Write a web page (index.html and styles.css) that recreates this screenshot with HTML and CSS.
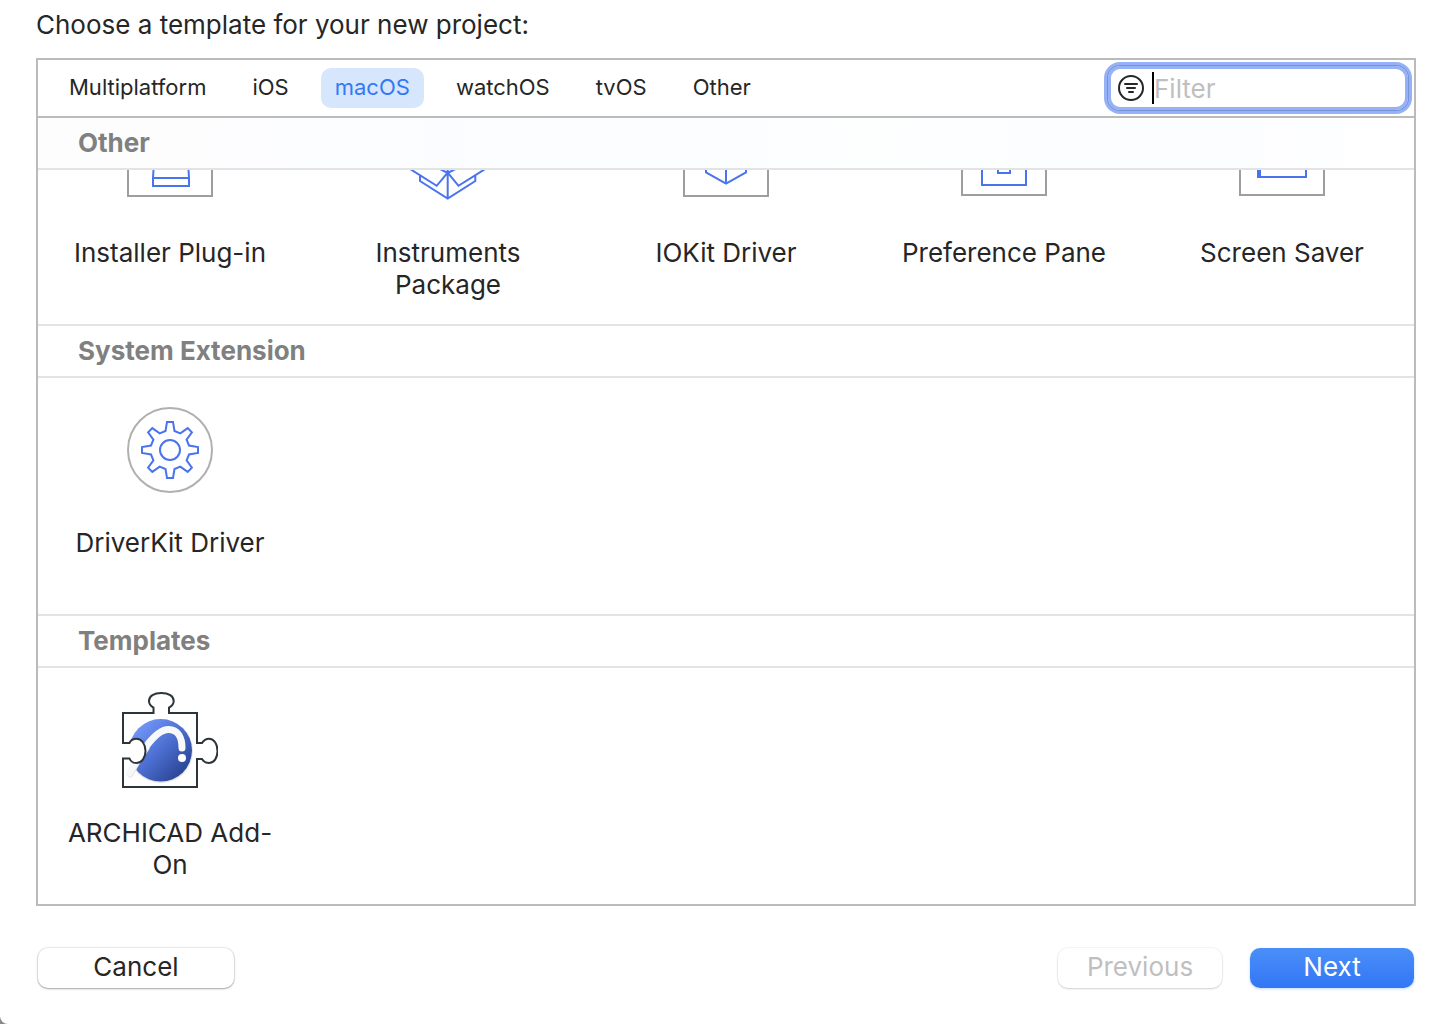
FILE: index.html
```
<!DOCTYPE html>
<html lang="en">
<head>
<meta charset="UTF-8">
<meta name="viewport" content="width=device-width, initial-scale=1.0">
<title>New Project</title>
<link rel="stylesheet" href="styles.css">
</head>

<body>

<main class="dialog">
    <h1>Choose a template for your new project:</h1>

    <div class="panel">
        <div class="toolbar">
            <div class="tabs">
                <button type="button" class="tab">Multiplatform</button>
                <button type="button" class="tab">iOS</button>
                <button type="button" class="tab active">macOS</button>
                <button type="button" class="tab">watchOS</button>
                <button type="button" class="tab">tvOS</button>
                <button type="button" class="tab">Other</button>
            </div>
            <label class="filter">
                <svg width="26" height="26" viewBox="0 0 26 26" aria-hidden="true">
                    <circle cx="13" cy="13" r="12"/>
                    <path d="M7 9H19M9 13H17M11 17H15"/>
                </svg>
                <span class="caret"></span>
                <input type="text" placeholder="Filter" aria-label="Filter">
            </label>
        </div>

        <section>
            <h2 class="stuck">Other</h2>
            <!-- scrolled: only the lower part of these icons shows -->
            <ul class="templates scrolled">
                <li>
                    <svg class="icon" viewBox="0 58 96 38">
                        <path class="frame" d="M6 50V84H90V50"/>
                        <path d="M32 50L31 66V74H67V66L66 50M31 66H67"/>
                    </svg>
                    Installer Plug-in
                </li>
                <li>
                    <svg class="icon" viewBox="0 58 96 38">
                        <path d="M20 63V69L47.7 86.5L75.3 69V63M47.7 86.5V58M9 56.3L36.7 73.8L47.7 60.5L58.5 73.8L86.3 56.3M38 56L47.7 61L57.4 56"/>
                    </svg>
                    Instruments Package
                </li>
                <li>
                    <svg class="icon" viewBox="0 58 96 38">
                        <path class="frame" d="M6 50V84H90V50"/>
                        <path d="M28 50V60.3L48 71.7L68 60.3V50M48 50V71.7"/>
                    </svg>
                    IOKit Driver
                </li>
                <li>
                    <svg class="icon" viewBox="0 58 96 38">
                        <path class="frame" d="M6 50V83H90V50"/>
                        <path d="M26 50V73H70V50M42 50V61H54V50"/>
                    </svg>
                    Preference Pane
                </li>
                <li>
                    <svg class="icon" viewBox="0 58 96 38">
                        <path class="frame" d="M6 50V83H90V50"/>
                        <path d="M24 50V65H72V50M26 50V65"/>
                    </svg>
                    Screen Saver
                </li>
            </ul>
        </section>

        <section>
            <h2>System Extension</h2>
            <ul class="templates">
                <li>
                    <svg class="icon" viewBox="0 0 96 96">
                        <circle class="ring" cx="48" cy="48" r="42"/>
                        <g transform="translate(48 48)">
                            <path d="M-4.5 -19L-3 -28H3L4.5 -19L10.3 -16.6L17.7 -21.9L21.9 -17.7L16.6 -10.3L19 -4.5L28 -3V3L19 4.5L16.6 10.3L21.9 17.7L17.7 21.9L10.3 16.6L4.5 19L3 28H-3L-4.5 19L-10.3 16.6L-17.7 21.9L-21.9 17.7L-16.6 10.3L-19 4.5L-28 3V-3L-19 -4.5L-16.6 -10.3L-21.9 -17.7L-17.7 -21.9L-10.3 -16.6Z"/>
                            <circle r="10"/>
                        </g>
                    </svg>
                    DriverKit Driver
                </li>
            </ul>
        </section>

        <section>
            <h2>Templates</h2>
            <ul class="templates">
                <li>
                    <svg class="icon puzzle" viewBox="0 0 96 96">
                        <defs>
                            <linearGradient id="ball" x1="0.1" y1="0.1" x2="0.9" y2="0.9">
                                <stop offset="0" stop-color="#7599fb"/>
                                <stop offset="0.5" stop-color="#4c6ed0"/>
                                <stop offset="1" stop-color="#28418f"/>
                            </linearGradient>
                        </defs>
                        <circle class="ball-shadow" cx="39" cy="59" r="32"/>
                        <circle class="ball" cx="38.7" cy="58.3" r="31.3"/>
                        <path class="swoosh-shadow" d="M8 82C13 73 17 65 24 56"/>
                        <path class="swoosh" d="M7.5 81C13 71 17 63 24.5 54C32 44 39 37.5 46.5 37.5C56 37.5 60 46 60 56"/>
                        <circle class="dot" cx="60" cy="66" r="4"/>
                        <path class="indent" d="M1 51H7.500C8.500 48.500 11 46.700 14.500 46.700C19.500 46.700 23.500 52 23.500 59S19.500 71 14.500 71C11 71 8.500 69 7.500 66.500H1Z"/>
                        <path class="piece" d="M1 21H31.5V15.7C28.5 14 27 11.5 27 9C27 4 32 1 39.3 1S51.7 4 51.7 9C51.7 11.500 50 14 47 15.700V21H75V51H80C81.5 48.5 84 46.7 87 46.7C92 46.7 95.5 52 95.5 59S92 71 87 71C84 71 81.5 69.5 80 67H75V95H1V66.5H7.5C8.5 69 11 71 14.5 71C19.5 71 23.5 66 23.5 59S19.5 46.7 14.5 46.7C11 46.7 8.5 48.5 7.5 51H1Z"/>
                    </svg>
                    ARCHICAD Add-On
                </li>
            </ul>
        </section>
    </div>

    <div class="buttons">
        <button type="button" class="cancel">Cancel</button>
        <button type="button" disabled>Previous</button>
        <button type="button" class="next">Next</button>
    </div>
</main>

</body>
</html>
```
FILE: styles.css
```
* {
    box-sizing: border-box;
}

body {
    margin: 0;
    background-color: #8a8a8a;
    color: #262626;
    font-family: Inter, "Liberation Sans", sans-serif;
    font-size: 26px;
    line-height: 32px;
}

h1, h2, ul {
    margin: 0;
    padding: 0;
}

button, input {
    font: inherit;
    color: inherit;
}

.dialog {
    display: flex;
    flex-direction: column;
    min-height: 100vh;
    padding: 9px 24px 36px 36px;
    background-color: #fff;
    border-bottom-left-radius: 8px;
}

h1 {
    font-size: 26px;
    font-weight: 400;
    margin-bottom: 17px;
}

.panel {
    flex: 1;
    border: 2px solid #bbb;
}

.toolbar {
    display: flex;
    align-items: center;
    justify-content: space-between;
    padding: 6px 6px 6px 17px;
    border-bottom: 2px solid #bbb;
}

.tabs {
    display: flex;
    gap: 18px;
}

.tab {
    height: 40px;
    padding: 0 14px 2px;
    border: 0;
    border-radius: 10px;
    background: none;
    font-size: 22px;
}

.tab.active {
    background-color: #d6e6fd;
    color: #3478f6;
}

.filter {
    display: flex;
    align-items: center;
    width: 300px;
    height: 44px;
    padding: 0 7px;
    border: 3px solid #96b1f5;
    border-radius: 12px;
    box-shadow: 0 0 0 1px #7593d9, 0 0 0 4px #96b1f5;
}

.filter svg {
    flex: none;
    fill: none;
    stroke: #262626;
    stroke-width: 2;
    stroke-linecap: round;
}

.caret {
    flex: none;
    width: 2px;
    height: 32px;
    margin-left: 8px;
    background-color: #000;
}

.filter input {
    flex: 1;
    min-width: 0;
    padding: 2px 0 0;
    border: 0;
    outline: none;
    background: none;
}

.filter input::placeholder {
    color: #bfbfbf;
    opacity: 1;
}

h2 {
    padding: 9px 40px;
    border-top: 2px solid #e3e3e3;
    border-bottom: 2px solid #e3e3e3;
    color: #808080;
    font-size: 26px;
    font-weight: 700;
}

h2.stuck {
    border-top: 0;
    background: linear-gradient(to right, #fdfdfd, #fbfcff 30%, #fdfefe 60%, #fcfdff 85%, #fff);
}

.templates {
    display: grid;
    grid-template-columns: repeat(5, 208px);
    justify-content: space-between;
    padding: 24px 28px 23px;
    list-style: none;
    text-align: center;
}

.templates.scrolled {
    padding-top: 0;
}

.templates li {
    min-height: 189px;
}

.templates.scrolled li {
    min-height: 131px;
}

.icon {
    display: block;
    width: 96px;
    margin: 0 auto 29px;
    fill: none;
    stroke: #4a74ee;
    stroke-width: 2;
}

.frame {
    stroke: #9e9e9e;
}

.ring {
    stroke: #b0b0b0;
}

.puzzle {
    stroke: none;
}

.ball {
    fill: url(#ball);
}

.ball-shadow {
    fill: #e2e4ea;
}

.swoosh {
    stroke: #f7f8fa;
    stroke-width: 7;
    stroke-linecap: round;
}

.swoosh-shadow {
    stroke: #e4e4e4;
    stroke-width: 7;
    stroke-linecap: round;
}

.dot {
    fill: #fff;
}

.indent {
    fill: #fff;
}

.piece {
    stroke: #2b353b;
    stroke-width: 2;
}

.buttons {
    display: flex;
    gap: 28px;
    margin-top: 42px;
    padding: 0 2px;
}

.buttons button {
    width: 164px;
    height: 40px;
    padding: 0 0 2px;
    border: 0;
    border-radius: 10px;
    background-color: #fff;
    box-shadow: 0 0 1px 1px rgba(0, 0, 0, 0.08), 0 1px 2px rgba(0, 0, 0, 0.3);
}

.buttons .cancel {
    width: 196px;
    margin-right: auto;
}

.buttons button:disabled {
    color: #bfbfbf;
    box-shadow: 0 0 1px 1px rgba(0, 0, 0, 0.04), 0 1px 2px rgba(0, 0, 0, 0.15);
}

.buttons .next {
    background: linear-gradient(#4a8ff8, #3376f6);
    color: #fff;
    box-shadow: 0 1px 3px rgba(52, 120, 246, 0.3);
}
```
